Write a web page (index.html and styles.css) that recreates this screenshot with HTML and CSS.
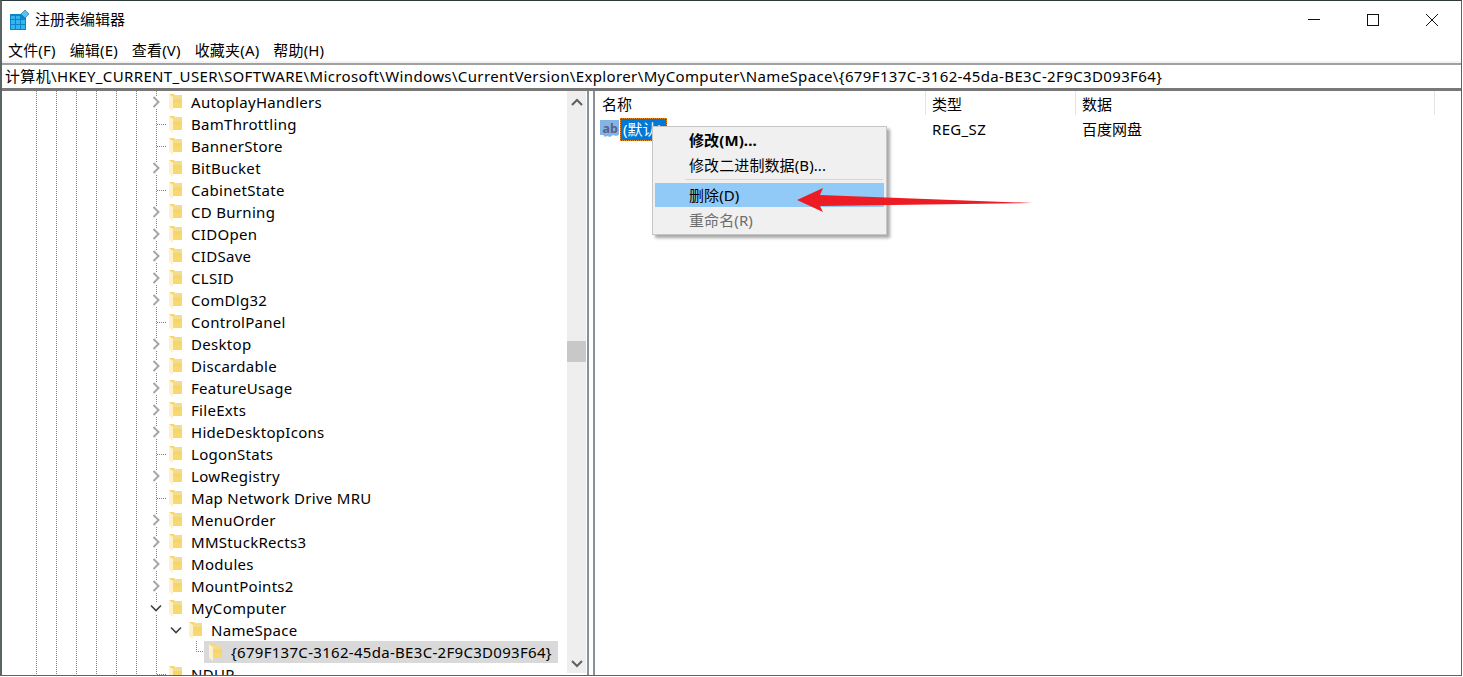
FILE: index.html
```html
<!DOCTYPE html>
<html lang="zh-CN">
<head>
<meta charset="utf-8">
<title>注册表编辑器</title>
<link rel="stylesheet" href="styles.css">
</head>
<body>
<svg class="defs" width="0" height="0" aria-hidden="true">
  <symbol id="folder" viewBox="0 0 14 18">
    <path d="M0 1h5l1 1h7v13H4z" fill="#f6d56f"/>
    <path d="M4 10h9v5H4z" fill="#f9d871"/>
    <path d="M4 2h9v4H4z" fill="#f5dc8c"/>
    <path d="M0 1l4 3v14l-4-3z" fill="#fdf1c9"/>
  </symbol>
  <symbol id="right" viewBox="0 0 12 12"><path d="M3.500 1l5 5-5 5" fill="none" stroke="#a6a6a6" stroke-width="2"/></symbol>
  <symbol id="down" viewBox="0 0 12 12"><path d="M1 3.500l5 5 5-5" fill="none" stroke="#404040" stroke-width="1.600"/></symbol>
</svg>
<div class="window">
  <header class="titlebar">
    <svg class="appicon" viewBox="0 0 20 20" width="20" height="20">
      <rect x="0" y="4" width="16" height="16" fill="#0a86c8"/>
      <path d="M1 6h4v3H1zM6 6h4v3H6zM1 10h4v4H1zM6 10h4v4H6zM11 10h4v4h-4zM1 15h4v4H1zM6 15h4v4H6zM11 15h4v4h-4z" fill="#35b4f0"/>
      <path d="M15 0l4 4-4 4-4-4z" fill="#5cc0ea" stroke="#1a7fb5" stroke-width=".7"/>
    </svg>
    <span class="title">注册表编辑器</span>
    <div class="controls">
      <svg width="14" height="14" viewBox="0 0 14 14"><path d="M1 6.500h12" stroke="#111" fill="none"/></svg>
      <svg width="14" height="14" viewBox="0 0 14 14"><rect x="1.500" y="1.500" width="11" height="11" stroke="#111" fill="none"/></svg>
      <svg width="14" height="14" viewBox="0 0 14 14"><path d="M1 1l12 12M13 1L1 13" stroke="#111" fill="none"/></svg>
    </div>
  </header>
  <nav class="menubar">
    <span>文件(F)</span><span>编辑(E)</span><span>查看(V)</span><span>收藏夹(A)</span><span>帮助(H)</span>
  </nav>
  <div class="address">计算机\HKEY_CURRENT_USER\SOFTWARE\Microsoft\Windows\CurrentVersion\Explorer\MyComputer\NameSpace\{679F137C-3162-45da-BE3C-2F9C3D093F64}</div>
  <main class="panes">
    <section class="treepane">
      <div class="tree">
        <div class="row"><svg class="chev"><use href="#right"/></svg><svg class="fold"><use href="#folder"/></svg><span>AutoplayHandlers</span></div>
        <div class="row leaf"><svg class="fold"><use href="#folder"/></svg><span>BamThrottling</span></div>
        <div class="row leaf"><svg class="fold"><use href="#folder"/></svg><span>BannerStore</span></div>
        <div class="row"><svg class="chev"><use href="#right"/></svg><svg class="fold"><use href="#folder"/></svg><span>BitBucket</span></div>
        <div class="row leaf"><svg class="fold"><use href="#folder"/></svg><span>CabinetState</span></div>
        <div class="row"><svg class="chev"><use href="#right"/></svg><svg class="fold"><use href="#folder"/></svg><span>CD Burning</span></div>
        <div class="row"><svg class="chev"><use href="#right"/></svg><svg class="fold"><use href="#folder"/></svg><span>CIDOpen</span></div>
        <div class="row"><svg class="chev"><use href="#right"/></svg><svg class="fold"><use href="#folder"/></svg><span>CIDSave</span></div>
        <div class="row"><svg class="chev"><use href="#right"/></svg><svg class="fold"><use href="#folder"/></svg><span>CLSID</span></div>
        <div class="row"><svg class="chev"><use href="#right"/></svg><svg class="fold"><use href="#folder"/></svg><span>ComDlg32</span></div>
        <div class="row leaf"><svg class="fold"><use href="#folder"/></svg><span>ControlPanel</span></div>
        <div class="row"><svg class="chev"><use href="#right"/></svg><svg class="fold"><use href="#folder"/></svg><span>Desktop</span></div>
        <div class="row"><svg class="chev"><use href="#right"/></svg><svg class="fold"><use href="#folder"/></svg><span>Discardable</span></div>
        <div class="row"><svg class="chev"><use href="#right"/></svg><svg class="fold"><use href="#folder"/></svg><span>FeatureUsage</span></div>
        <div class="row"><svg class="chev"><use href="#right"/></svg><svg class="fold"><use href="#folder"/></svg><span>FileExts</span></div>
        <div class="row"><svg class="chev"><use href="#right"/></svg><svg class="fold"><use href="#folder"/></svg><span>HideDesktopIcons</span></div>
        <div class="row leaf"><svg class="fold"><use href="#folder"/></svg><span>LogonStats</span></div>
        <div class="row"><svg class="chev"><use href="#right"/></svg><svg class="fold"><use href="#folder"/></svg><span>LowRegistry</span></div>
        <div class="row leaf"><svg class="fold"><use href="#folder"/></svg><span>Map Network Drive MRU</span></div>
        <div class="row"><svg class="chev"><use href="#right"/></svg><svg class="fold"><use href="#folder"/></svg><span>MenuOrder</span></div>
        <div class="row"><svg class="chev"><use href="#right"/></svg><svg class="fold"><use href="#folder"/></svg><span>MMStuckRects3</span></div>
        <div class="row"><svg class="chev"><use href="#right"/></svg><svg class="fold"><use href="#folder"/></svg><span>Modules</span></div>
        <div class="row"><svg class="chev"><use href="#right"/></svg><svg class="fold"><use href="#folder"/></svg><span>MountPoints2</span></div>
        <div class="row"><svg class="chev"><use href="#down"/></svg><svg class="fold"><use href="#folder"/></svg><span>MyComputer</span></div>
        <div class="row lvl1"><svg class="chev"><use href="#down"/></svg><svg class="fold"><use href="#folder"/></svg><span>NameSpace</span></div>
        <div class="row leaf lvl2"><svg class="fold"><use href="#folder"/></svg><span>{679F137C-3162-45da-BE3C-2F9C3D093F64}</span></div>
        <div class="row leaf"><svg class="fold"><use href="#folder"/></svg><span>NDUP</span></div>
      </div>
      <div class="scrollbar">
        <svg class="sb-arrow" width="12" height="8" viewBox="0 0 12 8"><path d="M1 7l5-5 5 5" fill="none" stroke="#606060" stroke-width="2"/></svg>
        <div class="thumb"></div>
        <svg class="sb-arrow" width="12" height="8" viewBox="0 0 12 8"><path d="M1 1l5 5 5-5" fill="none" stroke="#606060" stroke-width="2"/></svg>
      </div>
    </section>
    <div class="splitter"></div>
    <section class="values">
      <div class="vhead"><span class="c1">名称</span><span class="c2">类型</span><span class="c3">数据</span></div>
      <div class="vrow">
        <div class="c1 namecell">
          <svg class="abicon" width="20" height="20" viewBox="0 0 20 20">
            <path d="M0 1h19v15l-3 1-3-1-3 2-3-1-2 1-2-2H0z" fill="#82b4e6"/>
            <text x="2.500" y="13.500" class="abtext">ab</text>
          </svg>
          <span class="valname">(默认)</span>
        </div>
        <span class="c2 latin">REG_SZ</span><span class="c3">百度网盘</span>
      </div>
    </section>
  </main>
  <div class="ctx">
    <div class="item bold">修改(M)...</div>
    <div class="item">修改二进制数据(B)...</div>
    <div class="sep"></div>
    <div class="item hot">删除(D)</div>
    <div class="item off">重命名(R)</div>
  </div>
  <svg class="arrow" width="240" height="30" viewBox="0 0 240 30"><path d="M0 14L26 2l-3 7 213 8-213 3 3 6z" fill="#ed1c24"/></svg>
</div>
</body>
</html>
```
FILE: styles.css
```css
* { box-sizing: border-box; }
html, body { margin: 0; padding: 0; background: #fff; overflow: hidden; }
body { font: 15px/20px "Noto Sans", "Noto Sans CJK SC", sans-serif; color: #000; }
.defs { position: absolute; }
.window {
  position: relative;
  width: 1462px;
  height: 676px;
  display: flex;
  flex-direction: column;
  border: solid #5a6464;
  border-width: 1px 1px 1px 2px;
  border-top-color: #2c3a3a;
  overflow: hidden;
}
.titlebar { height: 38px; display: flex; align-items: center; padding-left: 8px; flex: none; }
.appicon { margin-top: -1px; }
.title { margin-left: 5px; margin-top: -2px; font-family: "Noto Sans CJK SC", sans-serif; }
.controls { margin-left: auto; display: flex; gap: 45px; padding-right: 22px; }
.controls svg { display: block; }
.menubar {
  height: 24px;
  display: flex;
  gap: 14px;
  padding: 0 0 3px 6px;
  align-items: center;
  flex: none;
  letter-spacing: .17px;
  background: linear-gradient(#fff 22px, #f3f3f3 22px);
}
.address {
  height: 28px;
  flex: none;
  border-top: 2px solid #a0a0a0;
  border-bottom: 3px solid #787878;
  padding-left: 3px;
  line-height: 22px;
  white-space: nowrap;
  letter-spacing: .37px;
}
.panes { flex: 1; display: flex; min-height: 0; }
.treepane { width: 584px; flex: none; display: flex; position: relative; }
.tree {
  flex: 1;
  min-width: 0;
  overflow: hidden;
  letter-spacing: .3px;
  background-image:
    repeating-linear-gradient(#808080 0 1px, transparent 1px 2px),
    repeating-linear-gradient(#808080 0 1px, transparent 1px 2px),
    repeating-linear-gradient(#808080 0 1px, transparent 1px 2px),
    repeating-linear-gradient(#808080 0 1px, transparent 1px 2px),
    repeating-linear-gradient(#808080 0 1px, transparent 1px 2px),
    repeating-linear-gradient(#808080 0 1px, transparent 1px 2px),
    repeating-linear-gradient(#808080 0 1px, transparent 1px 2px);
  background-size: 1px 100%;
  background-repeat: no-repeat;
  background-position: 34px 0, 54px 0, 74px 0, 94px 0, 114px 0, 134px 0, 154px 0;
}
.row { height: 22px; display: flex; align-items: center; padding-left: 148px; white-space: nowrap; position: relative; }
.chev { width: 12px; height: 12px; background: #fff; flex: none; }
.fold { width: 14px; height: 18px; margin-left: 7px; margin-right: 8px; flex: none; }
.leaf { padding-left: 160px; background: repeating-linear-gradient(90deg, #808080 0 1px, transparent 1px 2px) 155px 11px / 10px 1px no-repeat; }
.lvl1 { margin-left: 155px; padding-left: 13px; background: #fff; }
.lvl2 {
  margin-left: 155px;
  width: 401px;
  padding-left: 45px;
  background-color: #fff;
  background-image:
    linear-gradient(#d9d9d9, #d9d9d9),
    repeating-linear-gradient(90deg, #808080 0 1px, transparent 1px 2px),
    repeating-linear-gradient(#808080 0 1px, transparent 1px 2px);
  background-size: 354px 22px, 8px 1px, 1px 11px;
  background-position: 47px 0, 39px 10px, 39px 0;
  background-repeat: no-repeat;
}
.scrollbar {
  width: 19px;
  flex: none;
  margin-bottom: 2px;
  background: #eeeeee;
  position: relative;
  display: flex;
  flex-direction: column;
  justify-content: space-between;
  align-items: center;
  padding: 7px 0 5px;
}
.thumb { position: absolute; left: 0; right: 0; top: 250px; height: 21px; background: #c8c8c8; }
.sb-arrow { display: block; }
.splitter { width: 8px; flex: none; border-left: 2px solid #8a9099; border-right: 2px solid #8a9099; margin-left: 1px; }
.values { flex: 1; min-width: 0; }
.vhead { height: 24px; display: flex; align-items: center; }
.vrow { height: 24px; display: flex; align-items: center; margin-top: 2px; }
.c1 { width: 330px; padding-left: 7px; flex: none; }
.c2 { width: 150px; padding-left: 7px; flex: none; }
.c3 { width: 360px; padding-left: 7px; flex: none; }
.latin { letter-spacing: .33px; }
.vhead .c1 { height: 24px; line-height: 26px; }
.vhead .c2, .vhead .c3 { border-left: 1px solid #e4e4e4; height: 24px; line-height: 26px; padding-left: 6px; }
.vhead .c3 { border-right: 1px solid #e4e4e4; }
.namecell { display: flex; align-items: center; padding-left: 5px; }
.abicon { flex: none; }
.abtext { font: bold 12.500px "Noto Sans", sans-serif; fill: #5f5f86; }
.valname { height: 23px; width: 47px; background: #0078d7; color: #fff; border: 1px dotted #f08a24; padding-left: 2px; line-height: 21px; white-space: nowrap; }
.ctx {
  position: absolute;
  left: 650px;
  top: 125px;
  width: 235px;
  padding: 1px 2px 2px;
  background: #f0f0f0;
  border: 1px solid #c6c6c6;
  box-shadow: 3px 3px 3px rgba(0,0,0,.35);
  letter-spacing: .1px;
}
.item { height: 24px; line-height: 24px; padding-left: 34px; margin-bottom: 1px; }
.bold { font-weight: 700; }
.sep { height: 1px; background: #d7d7d7; margin: 2px 1px 3px 30px; }
.hot { background: #91c9f7; }
.off { color: #6d6d6d; margin-bottom: 0; }
.arrow { position: absolute; left: 795px; top: 185px; }
```
